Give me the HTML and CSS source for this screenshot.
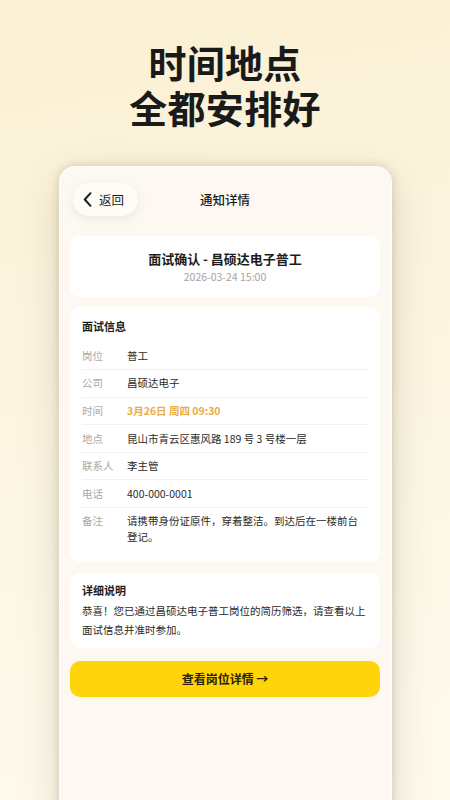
FILE: index.html
```html
<!DOCTYPE html>
<html lang="zh-CN">
<head>
<meta charset="utf-8">
<title>通知详情</title>
<link rel="stylesheet" href="styles.css">
</head>
<body>
<div class="page">
  <h1 class="headline"><span class="hl-line">时间地点</span><span class="hl-line">全都安排好</span></h1>
  <div class="phone">
    <div class="nav">
      <button class="back">
        <svg class="chev" width="9" height="15" viewBox="0 0 9 15"><path d="M7.5 1.2 L1.8 7.5 L7.5 13.8" fill="none" stroke="#1c1c1c" stroke-width="2" stroke-linecap="round" stroke-linejoin="round"/></svg>
        <span>返回</span>
      </button>
      <div class="nav-title">通知详情</div>
    </div>

    <div class="card summary">
      <div class="summary-title">面试确认 - 昌硕达电子普工</div>
      <div class="summary-date">2026-03-24 15:00</div>
    </div>

    <div class="card info">
      <div class="card-head">面试信息</div>
      <div class="row"><span class="label">岗位</span><span class="value">普工</span></div>
      <div class="row"><span class="label">公司</span><span class="value">昌硕达电子</span></div>
      <div class="row"><span class="label">时间</span><span class="value accent">3月26日 周四 09:30</span></div>
      <div class="row"><span class="label">地点</span><span class="value">昆山市青云区惠风路 189 号 3 号楼一层</span></div>
      <div class="row"><span class="label">联系人</span><span class="value">李主管</span></div>
      <div class="row"><span class="label">电话</span><span class="value">400-000-0001</span></div>
      <div class="row last"><span class="label">备注</span><span class="value">请携带身份证原件，穿着整洁。到达后在一楼前台登记。</span></div>
    </div>

    <div class="card detail">
      <div class="card-head">详细说明</div>
      <p class="detail-text">恭喜！您已通过昌硕达电子普工岗位的简历筛选，请查看以上面试信息并准时参加。</p>
    </div>

    <button class="cta">查看岗位详情 →</button>
  </div>
</div>
</body>
</html>
```

FILE: styles.css
```css
* { box-sizing: border-box; }
html, body {
  margin: 0;
  padding: 0;
  height: 800px;
  overflow: hidden;
}
body {
  font-family: "Noto Sans CJK SC", "Noto Sans", sans-serif;
  background: linear-gradient(170deg, #faf0d3 0%, #fcf5e1 45%, #fefaee 100%);
  color: #1c1c1c;
}
.page {
  width: 450px;
  height: 800px;
  display: flex;
  flex-direction: column;
  align-items: center;
}
.headline {
  margin: 40px 0 0;
  display: flex;
  flex-direction: column;
  align-items: center;
  gap: 1px;
  font-size: 38px;
  font-weight: 700;
  text-align: center;
  color: #1a1a1a;
  letter-spacing: 0.3px;
}
.hl-line {
  display: block;
  height: 44px;
  line-height: 44px;
}
.phone {
  margin-top: 37px;
  width: 333px;
  height: 660px;
  flex-shrink: 0;
  background: #fdf9f2;
  border: 1.5px solid #fffdf8;
  border-bottom: none;
  border-radius: 16px 16px 0 0;
  box-shadow: 0 0 10px rgba(90, 80, 50, 0.22), 0 14px 40px rgba(90, 80, 50, 0.18);
  padding: 15.5px 10.5px 0;
  display: flex;
  flex-direction: column;
}
.nav {
  position: relative;
  height: 33px;
  display: flex;
  align-items: center;
  justify-content: center;
  margin-bottom: 20px;
}
.back {
  position: absolute;
  left: 3px;
  top: 0;
  height: 33px;
  width: 65px;
  border: none;
  border-radius: 17px;
  background: #fefcf7;
  box-shadow: 0 3px 10px rgba(120, 100, 60, 0.12);
  display: flex;
  align-items: center;
  gap: 7px;
  padding: 0 0 0 10px;
  font-family: inherit;
  font-size: 12.5px;
  color: #1c1c1c;
}
.chev { display: block; }
.nav-title {
  font-size: 12.5px;
  font-weight: 500;
  color: #1c1c1c;
}
.card {
  background: #ffffff;
  border-radius: 10px;
}
.summary {
  padding: 14px 12px 13px;
  text-align: center;
  margin-bottom: 10px;
}
.summary-title {
  font-size: 13px;
  line-height: 18px;
  font-weight: 600;
  color: #1c1c1c;
}
.summary-date {
  margin-top: 2px;
  font-size: 10.5px;
  line-height: 14px;
  color: #a3a3a3;
}
.info {
  padding: 12px 12px 11px;
  margin-bottom: 11px;
}
.card-head {
  font-size: 11px;
  line-height: 14px;
  font-weight: 700;
  color: #1c1c1c;
}
.info .card-head { margin-bottom: 10px; }
.row {
  display: flex;
  padding: 5.3px 0;
  border-bottom: 1px solid #f4f1ec;
  font-size: 10.5px;
  line-height: 16px;
}
.row.last { border-bottom: none; }
.label {
  width: 45px;
  flex-shrink: 0;
  color: #a9a9a9;
}
.value {
  flex: 1;
  color: #2a2a2a;
}
.value.accent {
  color: #eaad45;
  font-weight: 600;
}
.detail {
  padding: 10px 12px 9px;
  margin-bottom: 13px;
}
.detail .card-head { margin-bottom: 4px; }
.detail-text {
  margin: 0;
  font-size: 10.5px;
  line-height: 19px;
  color: #2a2a2a;
}
.cta {
  height: 36px;
  width: 100%;
  border: none;
  border-radius: 10px;
  background: #ffd40a;
  font-family: inherit;
  font-size: 12px;
  font-weight: 600;
  color: #2a2205;
}
```
